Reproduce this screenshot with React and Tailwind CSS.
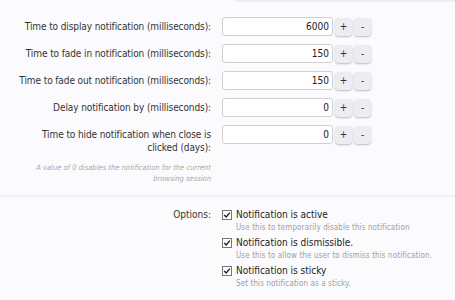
import React from "react";

const font = { fontFamily: "'DejaVu Sans', sans-serif", fontStretch: "condensed" };

function Field({ value }) {
  return (
    <div className="flex items-center">
      <div className="flex h-[19px] w-[111px] items-center justify-end rounded-[3px] border border-[#d0d0d4] bg-white pr-[3px] text-[10px] text-[#222]">
        {value}
      </div>
      <button className="ml-[2px] flex h-[18px] w-[17px] items-center justify-center rounded-[4px] bg-[#ececf2] text-[10px] text-[#333] shadow-[0_1px_2px_rgba(0,0,0,0.25)]">+</button>
      <button className="ml-[2px] flex h-[18px] w-[17px] items-center justify-center rounded-[4px] bg-[#ececf2] text-[10px] text-[#333] shadow-[0_1px_2px_rgba(0,0,0,0.25)]">-</button>
    </div>
  );
}

function Spinner({ label, value }) {
  return (
    <div className="flex items-center">
      <div className="w-[222px] shrink-0 whitespace-nowrap pr-[11px] text-right text-[10px] leading-[13px] tracking-[-0.1px] text-[#333]">{label}</div>
      <Field value={value} />
    </div>
  );
}

function Check({ label, desc }) {
  return (
    <div>
      <div className="flex items-center">
        <span className="flex h-[10px] w-[10px] items-center justify-center border border-[#777] bg-white">
          <svg viewBox="0 0 10 10" className="h-[8px] w-[8px]"><path d="M1.5 5 L4 7.5 L8.5 2" fill="none" stroke="#222" strokeWidth="1.8" /></svg>
        </span>
        <span className="ml-[4px] whitespace-nowrap text-[10px] leading-[13px] text-[#222]">{label}</span>
      </div>
      <div className="ml-[14px] mt-[1px] whitespace-nowrap text-[8px] leading-[12px] tracking-[0.1px] text-[#a0a0a0]">{desc}</div>
    </div>
  );
}

export default function App() {
  return (
    <div className="h-[300px] w-[455px] overflow-hidden bg-[#fbfbfd]" style={font}>
      <div className="ml-[235px] h-[2px] bg-[#eeeef2]" />
      <div className="flex flex-col gap-[8px] pt-[15px]">
        <Spinner label="Time to display notification (milliseconds):" value="6000" />
        <Spinner label="Time to fade in notification (milliseconds):" value="150" />
        <Spinner label="Time to fade out notification (milliseconds):" value="150" />
        <Spinner label="Delay notification by (milliseconds):" value="0" />
        <div className="flex items-start">
          <div className="w-[222px] shrink-0 pr-[11px] pt-[3px] text-right text-[10px] leading-[13px] tracking-[-0.1px] text-[#333]">Time to hide notification when close is<br />clicked (days):</div>
          <Field value="0" />
        </div>
      </div>
      <div className="mt-[8px] w-[222px] pr-[11px] text-right text-[7.5px] italic leading-[11px] text-[#aaa]">
        A value of 0 disables the notification for the current<br />browsing session
      </div>
      <div className="mt-[11px] h-[2px] bg-[#eef0f4]" />
      <div className="flex pt-[11px]">
        <div className="w-[222px] shrink-0 pr-[11px] text-right text-[10px] leading-[13px] text-[#333]">Options:</div>
        <div className="flex flex-col gap-[2px]">
          <Check label="Notification is active" desc="Use this to temporarily disable this notification" />
          <Check label="Notification is dismissible." desc="Use this to allow the user to dismiss this notification." />
          <Check label="Notification is sticky" desc="Set this notification as a sticky." />
        </div>
      </div>
    </div>
  );
}
